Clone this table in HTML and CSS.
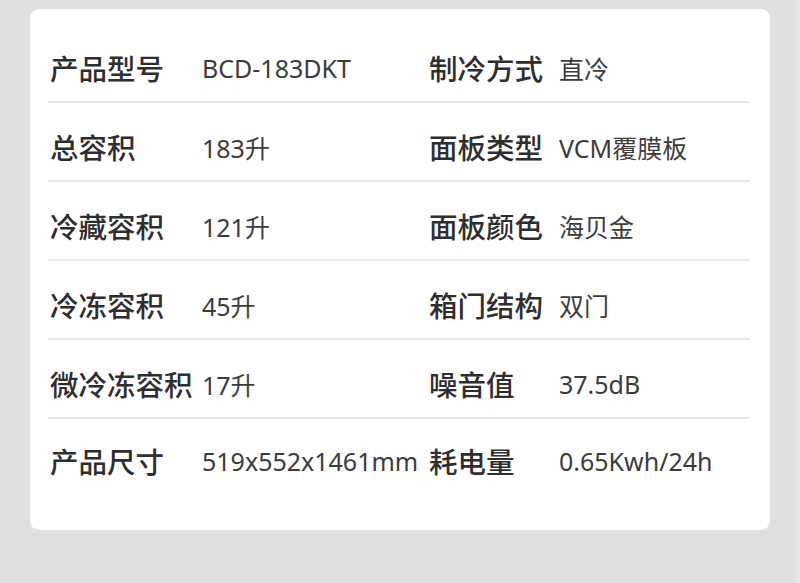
FILE: index.html
```html
<!DOCTYPE html>
<html lang="zh-CN">
<head>
<meta charset="utf-8">
<title>产品参数</title>
<link rel="stylesheet" href="styles.css">
</head>
<body>
<div class="page">
  <div class="card">
    <div class="row">
      <span class="label">产品型号</span><span class="value">BCD-183DKT</span>
      <span class="label">制冷方式</span><span class="value">直冷</span>
    </div>
    <div class="row">
      <span class="label">总容积</span><span class="value">183升</span>
      <span class="label">面板类型</span><span class="value">VCM覆膜板</span>
    </div>
    <div class="row">
      <span class="label">冷藏容积</span><span class="value">121升</span>
      <span class="label">面板颜色</span><span class="value">海贝金</span>
    </div>
    <div class="row">
      <span class="label">冷冻容积</span><span class="value">45升</span>
      <span class="label">箱门结构</span><span class="value">双门</span>
    </div>
    <div class="row">
      <span class="label">微冷冻容积</span><span class="value">17升</span>
      <span class="label">噪音值</span><span class="value">37.5dB</span>
    </div>
    <div class="row last">
      <span class="label">产品尺寸</span><span class="value">519x552x1461mm</span>
      <span class="label">耗电量</span><span class="value">0.65Kwh/24h</span>
    </div>
  </div>
</div>
</body>
</html>
```

FILE: styles.css
```css
html, body {
  margin: 0;
  padding: 0;
}
body {
  width: 800px;
  height: 583px;
  overflow: hidden;
  background: linear-gradient(to right, #e0e0e0 0, #e0e0e0 795px, #e7e7e7 795px, #e7e7e7 800px);
  font-family: "Noto Sans", "Noto Sans CJK SC", sans-serif;
}
.page {
  padding: 9px 0 0 30px;
}
.card {
  width: 740px;
  height: 521px;
  box-sizing: border-box;
  background: #ffffff;
  border-radius: 9px;
  padding: 15px 20px 0 18px;
}
.row {
  display: grid;
  grid-template-columns: 154px 225px 132px 1fr;
  align-items: center;
  height: 79px;
  box-sizing: border-box;
  padding-top: 10px;
  border-bottom: 2px solid #e8e8e8;
}
.row.last {
  border-bottom: none;
  padding-top: 6px;
  height: 77px;
}
.label {
  font-size: 28.5px;
  font-weight: 500;
  color: #2e2e2e;
  white-space: nowrap;
  padding-left: 2px;
}
.value {
  font-size: 25px;
  color: #3c3c3c;
  white-space: nowrap;
}
```
